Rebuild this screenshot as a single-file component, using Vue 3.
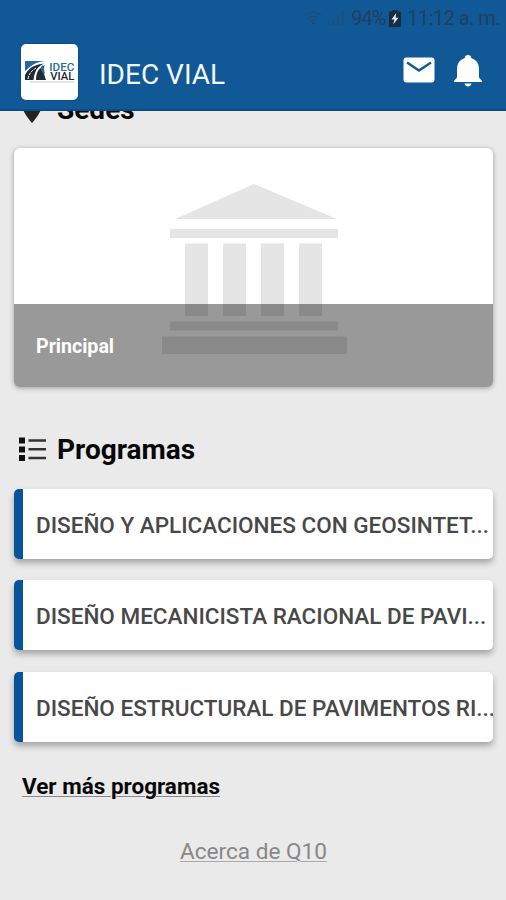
<template>
  <div class="app">
    <header class="header">
      <div class="status-bar">
        <svg class="wifi" viewBox="0 0 20 16">
          <path d="M1 5.5Q9 -1.5 17 5.5M3.8 8.5Q9 4 14.2 8.5M6.5 11.3Q9 9.2 11.5 11.3" />
          <circle cx="9" cy="13.6" r="1" />
        </svg>
        <svg class="signal" viewBox="0 0 17 16">
          <path d="M1.5 13v2M5.5 10v5M10 5.500v9.500M14.500 1v14" />
        </svg>
        <span class="battery-level">94%</span>
        <svg class="battery" viewBox="0 0 12 17">
          <path class="battery-body" d="M3.500 0h5v1.500H11q1 0 1 1V16q0 1-1 1H1q-1 0-1-1V2.500q0-1 1-1h2.500z" />
          <path class="bolt" d="M7.200 3L2.500 9.500h3L4.200 14.500 9.500 7.700H6.600z" />
        </svg>
        <span class="clock">11:12 a. m.</span>
      </div>
      <div class="toolbar">
        <div class="logo">
          <svg viewBox="0 0 57 56">
            <path class="logo-blue" d="M4 17h20q-9 1-14 5l-6 5z" />
            <path class="logo-dark" d="M4 36v-5q3-6 8-8.500Q17 20 23 19.500q-6 3-8 7T12.500 36z" />
            <path class="logo-dark" d="M15 36q0-7 3-10.500t6-4.500q-3 5-1 9l2 6z" />
            <path class="logo-lane" d="M7 35q1-7 8-11" />
            <path class="logo-blue" d="M22 21q-6 4 2 9z" />
            <text class="logo-idec" x="28.300" y="26.500" textLength="25" lengthAdjust="spacingAndGlyphs">IDEC</text>
            <text class="logo-vial" x="29.300" y="35.500" textLength="24" lengthAdjust="spacingAndGlyphs">VIAL</text>
            <path class="logo-line" d="M9 38h44" />
          </svg>
        </div>
        <h1 class="title">IDEC VIAL</h1>
        <button class="icon-btn" aria-label="Mensajes">
          <svg class="mail" viewBox="0 0 32 26">
            <rect x="0.500" y="0.500" width="31" height="25" rx="3" />
            <path d="M4 5.500L16 13.500 28 5.500" />
          </svg>
        </button>
        <button class="icon-btn" aria-label="Notificaciones">
          <svg class="bell" viewBox="0 0 28 32">
            <path d="M14 0q3 0 3.300 3Q25 5.500 25 14v8.500l3 3.500v1H0v-1l3-3.500V14Q3 5.500 10.700 3 11 0 14 0zM10.500 28.500h7q-.8 3-3.500 3t-3.500-3z" />
          </svg>
        </button>
      </div>
    </header>

    <main class="content">
      <h2 class="section-title sedes-title">
        <svg class="pin" viewBox="0 0 20 28">
          <path d="M10 0C4.500 0 0 4.400 0 10c0 7 10 18 10 18s10-11 10-18C20 4.400 15.500 0 10 0z" />
        </svg>
        Sedes
      </h2>

      <div class="sede-card">
        <svg class="building" viewBox="0 0 185 170">
          <path d="M92 0L175 35H13zM8 45h168v9H8zM23 59.500h23V132H23zM61 59.500h23V132H61zM99 59.500h23V132H99zM137 59.500h23V132H137zM8 137.500h168v9H8zM0 152.500h185V170H0z" />
        </svg>
        <div class="sede-name">Principal</div>
      </div>

      <h2 class="section-title programas-title">
        <svg class="list-icon" viewBox="0 0 28 25">
          <path class="dots" d="M0 .5h6v6H0zM0 9.500h6v6H0zM0 18h6v6H0z" />
          <path class="lines" d="M9.500 3.500H27M9.500 12.300H27M9.500 21H27" />
        </svg>
        Programas
      </h2>

      <ul class="program-list">
        <li v-for="programa in programas" :key="programa" class="program">
          <span>{{ programa }}</span>
        </li>
      </ul>

      <a class="more-link">Ver más programas</a>
      <a class="about-link">Acerca de Q10</a>
    </main>
  </div>
</template>

<script setup>
const programas = [
  'DISEÑO Y APLICACIONES CON GEOSINTET...',
  'DISEÑO MECANICISTA RACIONAL DE PAVI...',
  'DISEÑO ESTRUCTURAL DE PAVIMENTOS RI...'
]
</script>

<style>
body {
  margin: 0;
  background: #eaeaea;
}
</style>

<style scoped>
.app {
  height: 900px;
  overflow: hidden;
  display: flex;
  flex-direction: column;
  background: #eaeaea;
  font-family: Roboto, "Liberation Sans", sans-serif;
}

.header {
  flex: none;
  height: 111px;
  box-sizing: border-box;
  background: #105996;
  border-bottom: 2px solid #084c8b;
}

.status-bar {
  height: 36px;
  display: flex;
  align-items: center;
  justify-content: flex-end;
  padding-right: 6px;
  color: #213f5e;
  font-size: 20px;
}

.wifi {
  width: 20px;
  height: 16px;
  margin-right: 4px;
  fill: #213f5e;
}

.wifi path,
.signal path {
  fill: none;
  stroke: #264b70;
  stroke-width: 1.5;
}

.signal {
  width: 17px;
  height: 16px;
  margin-right: 6px;
}

.battery-level {
  width: 35px;
  margin-right: 3px;
  white-space: nowrap;
  letter-spacing: -1px;
}

.battery {
  width: 12px;
  height: 17px;
  margin-right: 6px;
}

.battery-body {
  fill: #182c40;
}

.bolt {
  fill: #e6edf3;
}

.clock {
  white-space: nowrap;
  letter-spacing: -0.55px;
}

.toolbar {
  height: 73px;
  display: flex;
  align-items: center;
  padding: 0 24px 0 21px;
}

.logo {
  width: 57px;
  height: 56px;
  margin-bottom: 1px;
  background: #fff;
  border-radius: 5px;
  box-shadow: 0 0 2px #073c72;
}

.logo svg {
  display: block;
  width: 57px;
  height: 56px;
}

.logo-blue {
  fill: #2467a1;
}

.logo-dark {
  fill: #222b31;
}

.logo-lane {
  fill: none;
  stroke: #fff;
  stroke-width: 1;
  stroke-dasharray: 3 1;
}

.logo-idec,
.logo-vial {
  font-size: 11.5px;
  font-weight: 500;
  fill: #2d6c9e;
}

.logo-vial {
  font-size: 10.5px;
  fill: #242a2d;
}

.logo-line {
  stroke: #a9bac6;
  stroke-width: 0.7;
}

.title {
  flex: 1;
  margin: 4px 0 0 21px;
  color: #f2f7fb;
  font-size: 28px;
  font-weight: 400;
  line-height: 34px;
}

.icon-btn {
  padding: 0;
  border: none;
  background: none;
  display: flex;
  margin-left: 19px;
}

.mail {
  width: 32px;
  height: 26px;
  margin-bottom: 6px;
  fill: #fff;
}

.mail path {
  fill: none;
  stroke: #105996;
  stroke-width: 2.3;
}

.bell {
  width: 28px;
  height: 32px;
  margin-bottom: 4px;
  fill: #fff;
}

.content {
  flex: 1;
  min-height: 0;
  overflow: hidden;
  display: flex;
  flex-direction: column;
  padding: 0 13px 0 14px;
}

.section-title {
  flex: none;
  display: flex;
  align-items: center;
  margin: 0;
  height: 32px;
  color: #080808;
  font-size: 28px;
  font-weight: 700;
  line-height: 32px;
}

.sedes-title {
  margin-top: -17px;
}

.pin {
  width: 20px;
  height: 28px;
  margin: 0 15px 2px 8px;
  fill: #222;
}

.sede-card {
  flex: none;
  height: 239px;
  margin-top: 22px;
  display: grid;
  grid-template-rows: 156px 83px;
  overflow: hidden;
  background: #fff;
  border-radius: 6px;
  box-shadow: 0 1px 5px rgba(0, 0, 0, 0.35);
}

.building {
  grid-area: 1 / 1 / 3 / 2;
  justify-self: center;
  width: 185px;
  height: 170px;
  margin: 35.5px 0 0 1.5px;
  fill: #e5e5e5;
}

.sede-name {
  grid-area: 2 / 1 / 3 / 2;
  box-sizing: border-box;
  padding-left: 22px;
  color: #fff;
  background: rgba(0, 0, 0, 0.4);
  font-size: 19.6px;
  font-weight: 700;
  line-height: 86px;
}

.programas-title {
  margin-top: 47px;
}

.list-icon {
  width: 28px;
  height: 25px;
  margin: 0 10px 2px 5px;
}

.dots {
  fill: #111;
}

.lines {
  stroke: #333;
  stroke-width: 2.6;
}

.program-list {
  margin: 23px 0 0;
  padding: 0;
  list-style: none;
  display: flex;
  flex-direction: column;
  gap: 21.3px;
}

.program {
  height: 70px;
  box-sizing: border-box;
  overflow: hidden;
  padding-left: 13px;
  border-left: 9px solid #07549a;
  border-radius: 5px;
  background: #fff;
  box-shadow: 0 4px 6px rgba(0, 0, 0, 0.3);
  color: #484848;
  font-size: 22.5px;
  font-weight: 500;
  line-height: 73px;
  white-space: nowrap;
}

.more-link {
  align-self: flex-start;
  margin: 31px 0 0 8px;
  color: #080808;
  font-size: 22.5px;
  font-weight: 700;
  line-height: 26px;
  text-decoration: underline;
  text-decoration-color: #888;
  text-decoration-thickness: 1px;
  text-underline-offset: 2px;
}

.about-link {
  align-self: center;
  margin-top: 40px;
  color: #888;
  font-size: 22.6px;
  line-height: 26px;
  text-decoration: underline;
  text-decoration-color: #aaa;
  text-decoration-thickness: 1px;
  text-underline-offset: 2px;
}
</style>
